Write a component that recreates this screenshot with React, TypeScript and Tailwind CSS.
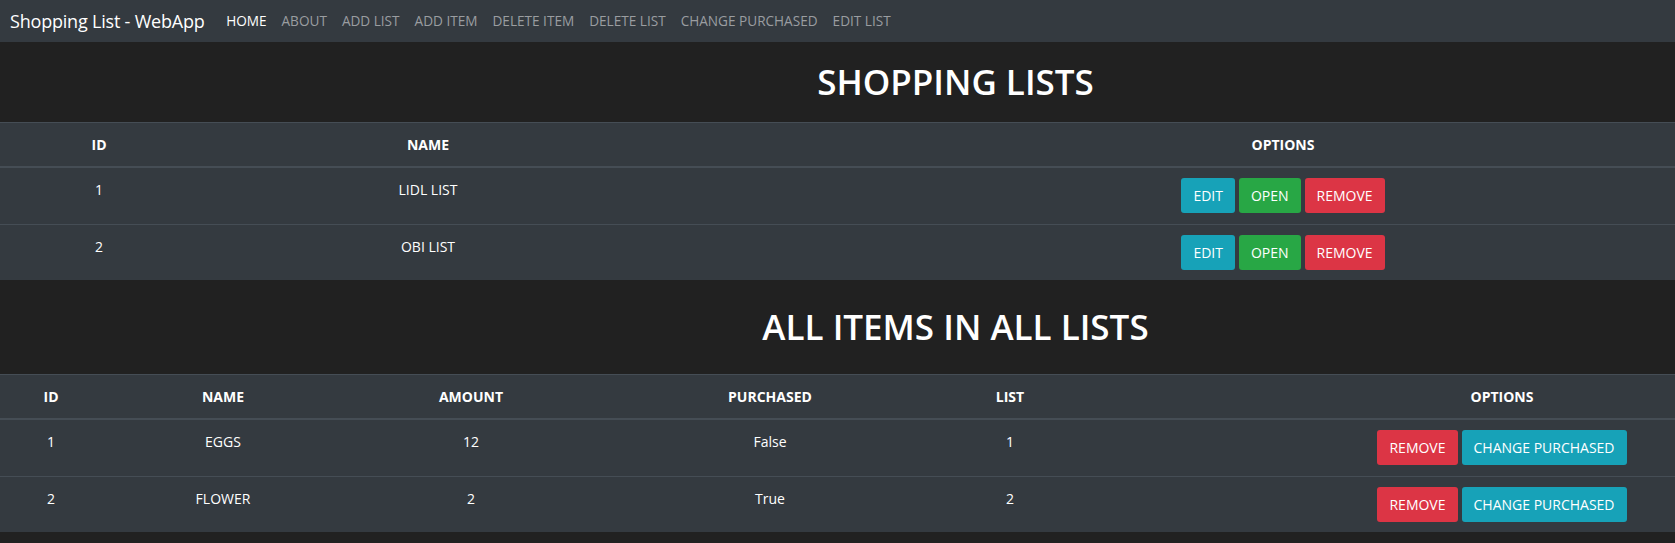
import React from 'react';

const navLinks = ['HOME', 'ABOUT', 'ADD LIST', 'ADD ITEM', 'DELETE ITEM', 'DELETE LIST', 'CHANGE PURCHASED', 'EDIT LIST'];

const lists = [
  { id: 1, name: 'LIDL LIST' },
  { id: 2, name: 'OBI LIST' },
];

const items = [
  { id: 1, name: 'EGGS', amount: 12, purchased: 'False', list: 1 },
  { id: 2, name: 'FLOWER', amount: 2, purchased: 'True', list: 2 },
];

const Btn = ({ color, children }: { color: string; children: React.ReactNode }) => (
  <button className={`${color} text-white text-[14px] leading-[21px] px-[11px] py-[6px] border border-transparent rounded-[3px]`}>
    {children}
  </button>
);

const App = () => {
  const listCols = 'grid grid-cols-[198px_460px_233px_1fr]';
  const itemCols = 'grid grid-cols-[102px_242px_254px_344px_136px_251px_1fr]';

  return (
    <div className="min-h-[543px] bg-[#212121] text-white" style={{ fontFamily: '"Open Sans", "Noto Sans", sans-serif' }}>
      {/* Navbar */}
      <nav className="h-[42px] bg-[#343a40] flex items-center pl-[10px]">
        <span className="text-[18px] text-white mr-[14px] tracking-[-0.2px]">Shopping List - WebApp</span>
        <ul className="flex">
          {navLinks.map((l, i) => (
            <li key={l} className={`px-[7.5px] text-[13.6px] ${i === 0 ? 'text-white' : 'text-[#9a9da0]'}`}>{l}</li>
          ))}
        </ul>
      </nav>

      {/* Shopping lists */}
      <div className="h-[80px] flex items-center justify-center pl-[236px]">
        <h1 className="text-[35px] font-semibold">SHOPPING LISTS</h1>
      </div>
      <div className="bg-[#343a40] text-[14px] leading-[21px]">
        <div className={`${listCols} h-[46px] items-center border-t border-b-2 border-[#454d55] font-bold text-center`}>
          <div>ID</div>
          <div>NAME</div>
          <div></div>
          <div>OPTIONS</div>
        </div>
        {lists.map((l, i) => (
          <div key={l.id} className={`${listCols} h-[56px] text-center ${i > 0 ? 'border-t border-[#454d55]' : ''}`}>
            <div className="pt-[11px]">{l.id}</div>
            <div className="pt-[11px]">{l.name}</div>
            <div></div>
            <div className="flex items-start justify-center gap-[4px] pt-[10px]">
              <Btn color="bg-[#17a2b8]">EDIT</Btn>
              <Btn color="bg-[#28a745]">OPEN</Btn>
              <Btn color="bg-[#dc3545]">REMOVE</Btn>
            </div>
          </div>
        ))}
      </div>

      {/* All items */}
      <div className="h-[94px] flex items-center justify-center pl-[236px]">
        <h1 className="text-[35px] font-semibold">ALL ITEMS IN ALL LISTS</h1>
      </div>
      <div className="bg-[#343a40] text-[14px] leading-[21px]">
        <div className={`${itemCols} h-[46px] items-center border-t border-b-2 border-[#454d55] font-bold text-center`}>
          <div>ID</div>
          <div>NAME</div>
          <div>AMOUNT</div>
          <div>PURCHASED</div>
          <div>LIST</div>
          <div></div>
          <div>OPTIONS</div>
        </div>
        {items.map((it, i) => (
          <div key={it.id} className={`${itemCols} h-[56px] text-center ${i > 0 ? 'border-t border-[#454d55]' : ''}`}>
            <div className="pt-[11px]">{it.id}</div>
            <div className="pt-[11px]">{it.name}</div>
            <div className="pt-[11px]">{it.amount}</div>
            <div className="pt-[11px]">{it.purchased}</div>
            <div className="pt-[11px]">{it.list}</div>
            <div></div>
            <div className="flex items-start justify-center gap-[4px] pt-[10px]">
              <Btn color="bg-[#dc3545]">REMOVE</Btn>
              <Btn color="bg-[#17a2b8]">CHANGE PURCHASED</Btn>
            </div>
          </div>
        ))}
      </div>
    </div>
  );
};

export default App;
